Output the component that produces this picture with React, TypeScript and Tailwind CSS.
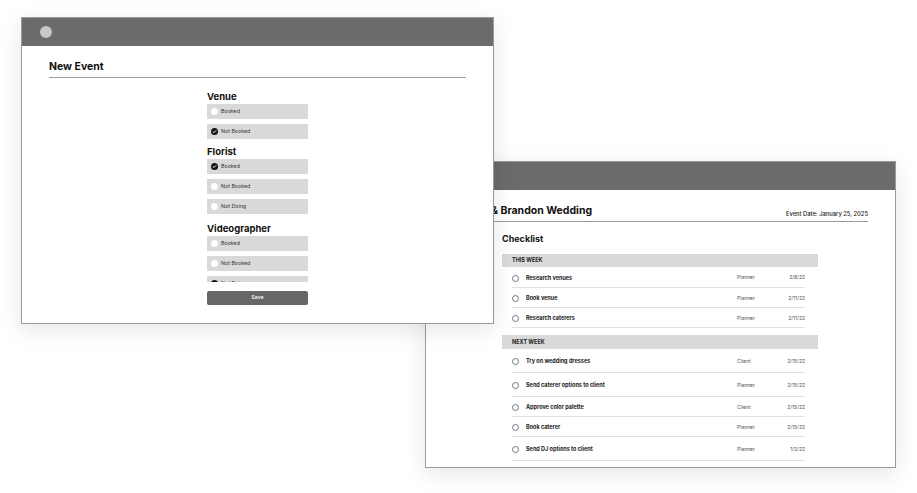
import React from 'react';

type Option = { label: string; checked?: boolean };
type Section = { title: string; gap: string; options: Option[] };

const sections: Section[] = [
  { title: 'Venue', gap: 'mt-0', options: [{ label: 'Booked' }, { label: 'Not Booked', checked: true }] },
  { title: 'Florist', gap: 'mt-[7px]', options: [{ label: 'Booked', checked: true }, { label: 'Not Booked' }, { label: 'Not Doing' }] },
  { title: 'Videographer', gap: 'mt-[9px]', options: [{ label: 'Booked' }, { label: 'Not Booked' }, { label: 'Not Doing', checked: true }] },
];

type Task = { name: string; who: string; due: string; h: string };

const thisWeek: Task[] = [
  { name: 'Research venues', who: 'Planner', due: '2/8/22', h: 'h-[21px]' },
  { name: 'Book venue', who: 'Planner', due: '2/11/22', h: 'h-[20px]' },
  { name: 'Research caterers', who: 'Planner', due: '2/11/22', h: 'h-[20px]' },
];

const nextWeek: Task[] = [
  { name: 'Try on wedding dresses', who: 'Client', due: '2/15/22', h: 'h-[24px]' },
  { name: 'Send caterer options to client', who: 'Planner', due: '2/15/22', h: 'h-[24px]' },
  { name: 'Approve color palette', who: 'Client', due: '2/15/22', h: 'h-[20px]' },
  { name: 'Book caterer', who: 'Planner', due: '2/15/22', h: 'h-[20px]' },
  { name: 'Send DJ options to client', who: 'Planner', due: '1/2/22', h: 'h-[24px]' },
];

function Radio({ checked }: { checked?: boolean }) {
  if (checked) {
    return (
      <svg width="7" height="7" viewBox="0 0 14 14" className="shrink-0">
        <circle cx="7" cy="7" r="7" fill="#111" />
        <path d="M3.8 7.2 L6 9.3 L10.2 4.9" stroke="#fff" strokeWidth="1.8" fill="none" strokeLinecap="round" strokeLinejoin="round" />
      </svg>
    );
  }
  return <div className="w-[7px] h-[7px] rounded-full bg-white shrink-0" />;
}

function WindowBar({ dot }: { dot?: boolean }) {
  return (
    <div className="h-[28px] bg-[#6b6b6b] flex items-center pl-[18px]">
      {dot && <div className="w-[12px] h-[12px] rounded-full bg-[#c8c8c8]" />}
    </div>
  );
}

function TaskRow({ task }: { task: Task }) {
  return (
    <div className={`${task.h} pt-[2px] flex items-center border-b border-[#e2e2e2]`}>
      <div className="w-[7px] h-[7px] rounded-full border border-[#777] shrink-0" />
      <div className="ml-[7px] flex-1 text-[5.5px] font-bold text-[#222]">{task.name}</div>
      <div className="w-[46px] text-[5px] text-[#555]">{task.who}</div>
      <div className="w-[22px] text-right text-[5px] text-[#555]">{task.due}</div>
    </div>
  );
}

export default function App() {
  return (
    <div className="relative w-[917px] h-[493px] bg-white overflow-hidden" style={{ fontFamily: 'Inter, "Liberation Sans", sans-serif' }}>
      {/* Back window - checklist */}
      <div className="absolute left-[425px] top-[161px] w-[471px] h-[307px] border border-[#9a9a9a] bg-white overflow-hidden shadow-[0_6px_22px_rgba(0,0,0,0.10)]">
        <WindowBar />
        <div className="mx-[27px] mt-[14px] pb-[3px] border-b border-[#9a9a9a] flex items-end justify-between">
          <div className="text-[10.5px] leading-[14px] font-bold text-[#111]">Sophia &amp; Brandon Wedding</div>
          <div className="text-[5.8px] leading-[8px] font-medium text-[#222]">Event Date: January 25, 2025</div>
        </div>
        <div className="ml-[76px] w-[316px]">
          <div className="mt-[11px] text-[9px] leading-[12px] font-bold text-[#111]">Checklist</div>

          <div className="mt-[9px] h-[13px] bg-[#d9d9d9] pl-[10px] flex items-center text-[5.5px] font-bold text-[#222]">THIS WEEK</div>
          <div className="ml-[10px] mr-[13px]">
            {thisWeek.map((t) => (
              <TaskRow key={t.name} task={t} />
            ))}
          </div>

          <div className="mt-[7px] h-[14px] bg-[#d9d9d9] pl-[10px] flex items-center text-[5.5px] font-bold text-[#222]">NEXT WEEK</div>
          <div className="ml-[10px] mr-[13px]">
            {nextWeek.map((t) => (
              <TaskRow key={t.name} task={t} />
            ))}
          </div>
        </div>
      </div>

      {/* Front window - new event form */}
      <div className="absolute z-10 left-[21px] top-[17px] w-[473px] h-[307px] border border-[#9a9a9a] bg-white shadow-[0_6px_22px_rgba(0,0,0,0.10)]">
        <WindowBar dot />
        <div className="mx-[27px] mt-[14px] pb-[3px] border-b border-[#9a9a9a]">
          <div className="text-[10.5px] leading-[14px] font-bold text-[#111]">New Event</div>
        </div>

        <div className="mx-auto w-[101px]">
          <div className="h-[204px] pt-[13px] overflow-hidden">
            {sections.map((s) => (
              <div key={s.title} className={s.gap}>
                <div className="text-[9.5px] leading-[12px] font-bold text-[#111] mb-[1px]">{s.title}</div>
                <div className="flex flex-col gap-[5px]">
                  {s.options.map((o) => (
                    <div key={o.label} className="h-[15px] bg-[#d9d9d9] flex items-center pl-[4px] gap-[3px]">
                      <Radio checked={o.checked} />
                      <span className="text-[5.3px] text-[#333]">{o.label}</span>
                    </div>
                  ))}
                </div>
              </div>
            ))}
          </div>
          <div className="mt-[9px] h-[14px] rounded-[2px] bg-[#666] flex items-center justify-center text-[5.3px] font-medium text-white">
            Save
          </div>
        </div>
      </div>
    </div>
  );
}
